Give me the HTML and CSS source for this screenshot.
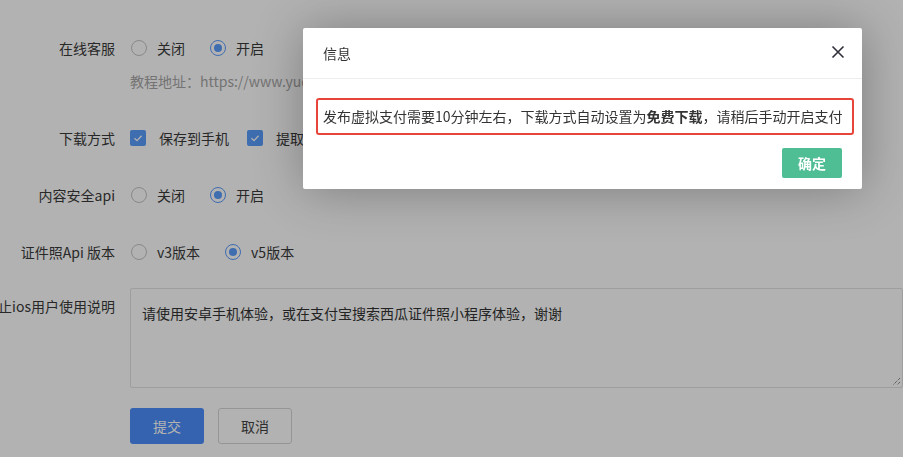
FILE: index.html
```html
<!DOCTYPE html>
<html lang="zh-CN">
<head>
<meta charset="utf-8">
<link rel="stylesheet" href="styles.css">
</head>
<body>
<div class="page">
  <div class="form-item first">
    <div class="label"><span>在线客服</span></div>
    <div class="control">
      <span class="radio"><i class="circle"></i>关闭</span>
      <span class="radio"><i class="circle on"></i>开启</span>
    </div>
  </div>
  <div class="aux">教程地址：https://www.yuque.com/xigua/docs</div>
  <div class="form-item">
    <div class="label"><span>下载方式</span></div>
    <div class="control">
      <span class="check"><i class="box"><svg viewBox="0 0 16 16" width="16" height="16"><path d="M4.5 8.2 L7 10.6 L11.6 5.8" fill="none" stroke="#fff" stroke-width="1.3"/></svg></i>保存到手机</span>
      <span class="check"><i class="box"><svg viewBox="0 0 16 16" width="16" height="16"><path d="M4.5 8.2 L7 10.6 L11.6 5.8" fill="none" stroke="#fff" stroke-width="1.3"/></svg></i>提取到邮箱</span>
    </div>
  </div>
  <div class="form-item">
    <div class="label"><span>内容安全api</span></div>
    <div class="control">
      <span class="radio"><i class="circle"></i>关闭</span>
      <span class="radio"><i class="circle on"></i>开启</span>
    </div>
  </div>
  <div class="form-item tight">
    <div class="label"><span>证件照Api 版本</span></div>
    <div class="control">
      <span class="radio"><i class="circle"></i>v3版本</span>
      <span class="radio"><i class="circle on"></i>v5版本</span>
    </div>
  </div>
  <div class="form-item area-row">
    <div class="label top"><span>禁止ios用户使用说明</span></div>
    <div class="control">
      <div class="textarea">请使用安卓手机体验，或在支付宝搜索西瓜证件照小程序体验，谢谢<svg class="grip" viewBox="0 0 10 10" width="10" height="10"><path d="M9 2 L2 9 M9 6 L6 9" stroke="#555" stroke-width="1" stroke-dasharray="1 1"/></svg></div>
    </div>
  </div>
  <div class="form-item btns">
    <div class="label"></div>
    <div class="control">
      <span class="btn primary">提交</span>
      <span class="btn plain">取消</span>
    </div>
  </div>
</div>

<div class="shade"></div>

<div class="layer">
  <div class="layer-title">信息
    <svg class="close" viewBox="0 0 14 14" width="14" height="14"><path d="M1.5 1.5 L12.5 12.5 M12.5 1.5 L1.5 12.5" stroke="#2f2f3a" stroke-width="1.6"/></svg>
  </div>
  <div class="layer-content">
    <div class="msg">发布虚拟支付需要10分钟左右，下载方式自动设置为<b>免费下载</b>，请稍后手动开启支付</div>
  </div>
  <div class="layer-btns"><span class="ok">确定</span></div>
</div>
</body>
</html>
```
FILE: styles.css
```css
html, body {
  margin: 0;
  padding: 0;
  background: #fff;
  font-family: "Noto Sans CJK SC", "Noto Sans", sans-serif;
  font-size: 14px;
  color: #3a3a3a;
  overflow: hidden;
  width: 903px;
  height: 457px;
}

.page {
  padding-top: 29px;
}

.form-item {
  display: flex;
  align-items: center;
  height: 38px;
  margin-bottom: 19px;
}

.form-item.first {
  margin-bottom: 0;
}

.form-item.tight {
  margin-bottom: 17px;
}

.label {
  width: 115px;
  flex: none;
  display: flex;
  justify-content: flex-end;
  white-space: nowrap;
  line-height: 20px;
}

.control {
  margin-left: 15px;
  display: flex;
  align-items: center;
  white-space: nowrap;
}

.aux {
  height: 28px;
  line-height: 28px;
  margin-left: 130px;
  margin-bottom: 24px;
  color: #a6a6a6;
  white-space: nowrap;
}

.radio {
  display: inline-flex;
  align-items: center;
  margin-right: 24px;
  margin-left: 1px;
}

.circle {
  box-sizing: border-box;
  width: 16px;
  height: 16px;
  border: 1px solid #c4c4c4;
  border-radius: 50%;
  margin-right: 10px;
  display: inline-flex;
  align-items: center;
  justify-content: center;
}

.circle.on {
  border-color: #5a9cfc;
}

.circle.on::after {
  content: "";
  width: 8px;
  height: 8px;
  border-radius: 50%;
  background: #5a9cfc;
}

.check {
  display: inline-flex;
  align-items: center;
  margin-right: 18px;
}

.box {
  width: 16px;
  height: 16px;
  border-radius: 2px;
  background: #5a9cfc;
  margin-right: 13px;
  display: inline-flex;
}

.area-row {
  height: 100px;
  align-items: flex-start;
  margin-bottom: 20px;
}

.label.top {
  padding-top: 8px;
}

.textarea {
  position: relative;
  box-sizing: border-box;
  width: 773px;
  height: 100px;
  border: 1px solid #e2e2e2;
  border-radius: 2px;
  padding: 12px 11px;
  line-height: 24px;
  color: #333;
}

.grip {
  position: absolute;
  right: 1px;
  bottom: 1px;
}

.btns {
  height: 36px;
}

.btn {
  box-sizing: border-box;
  display: inline-flex;
  align-items: center;
  justify-content: center;
  width: 74px;
  height: 36px;
  border-radius: 3px;
  margin-right: 14px;
}

.btn.primary {
  background: #4c8ffb;
  color: #fff;
}

.btn.plain {
  border: 1px solid #d6d6d6;
  color: #444;
  background: #fff;
}

.shade {
  position: fixed;
  inset: 0;
  background: rgba(0, 0, 0, 0.3);
}

.layer {
  position: absolute;
  left: 303px;
  top: 28px;
  width: 559px;
  height: 161px;
  background: #fff;
  box-shadow: 1px 1px 50px rgba(0, 0, 0, 0.3);
  border-radius: 2px;
}

.layer-title {
  position: relative;
  height: 50px;
  line-height: 50px;
  padding-left: 20px;
  border-bottom: 1px solid #eee;
  color: #333;
}

.close {
  position: absolute;
  right: 17px;
  top: 17px;
}

.layer-content {
  padding: 19px 8px 0 13px;
}

.msg {
  border: 2px solid #e8453a;
  border-radius: 3px;
  height: 33px;
  line-height: 33px;
  padding: 0 5px;
  color: #333;
  white-space: nowrap;
}

.msg b {
  font-weight: 700;
}

.layer-btns {
  display: flex;
  justify-content: flex-end;
  padding: 13px 20px 0 0;
}

.ok {
  width: 60px;
  height: 30px;
  border-radius: 2px;
  background: #4fbe94;
  color: #fff;
  font-weight: 700;
  display: inline-flex;
  align-items: center;
  justify-content: center;
}
```
